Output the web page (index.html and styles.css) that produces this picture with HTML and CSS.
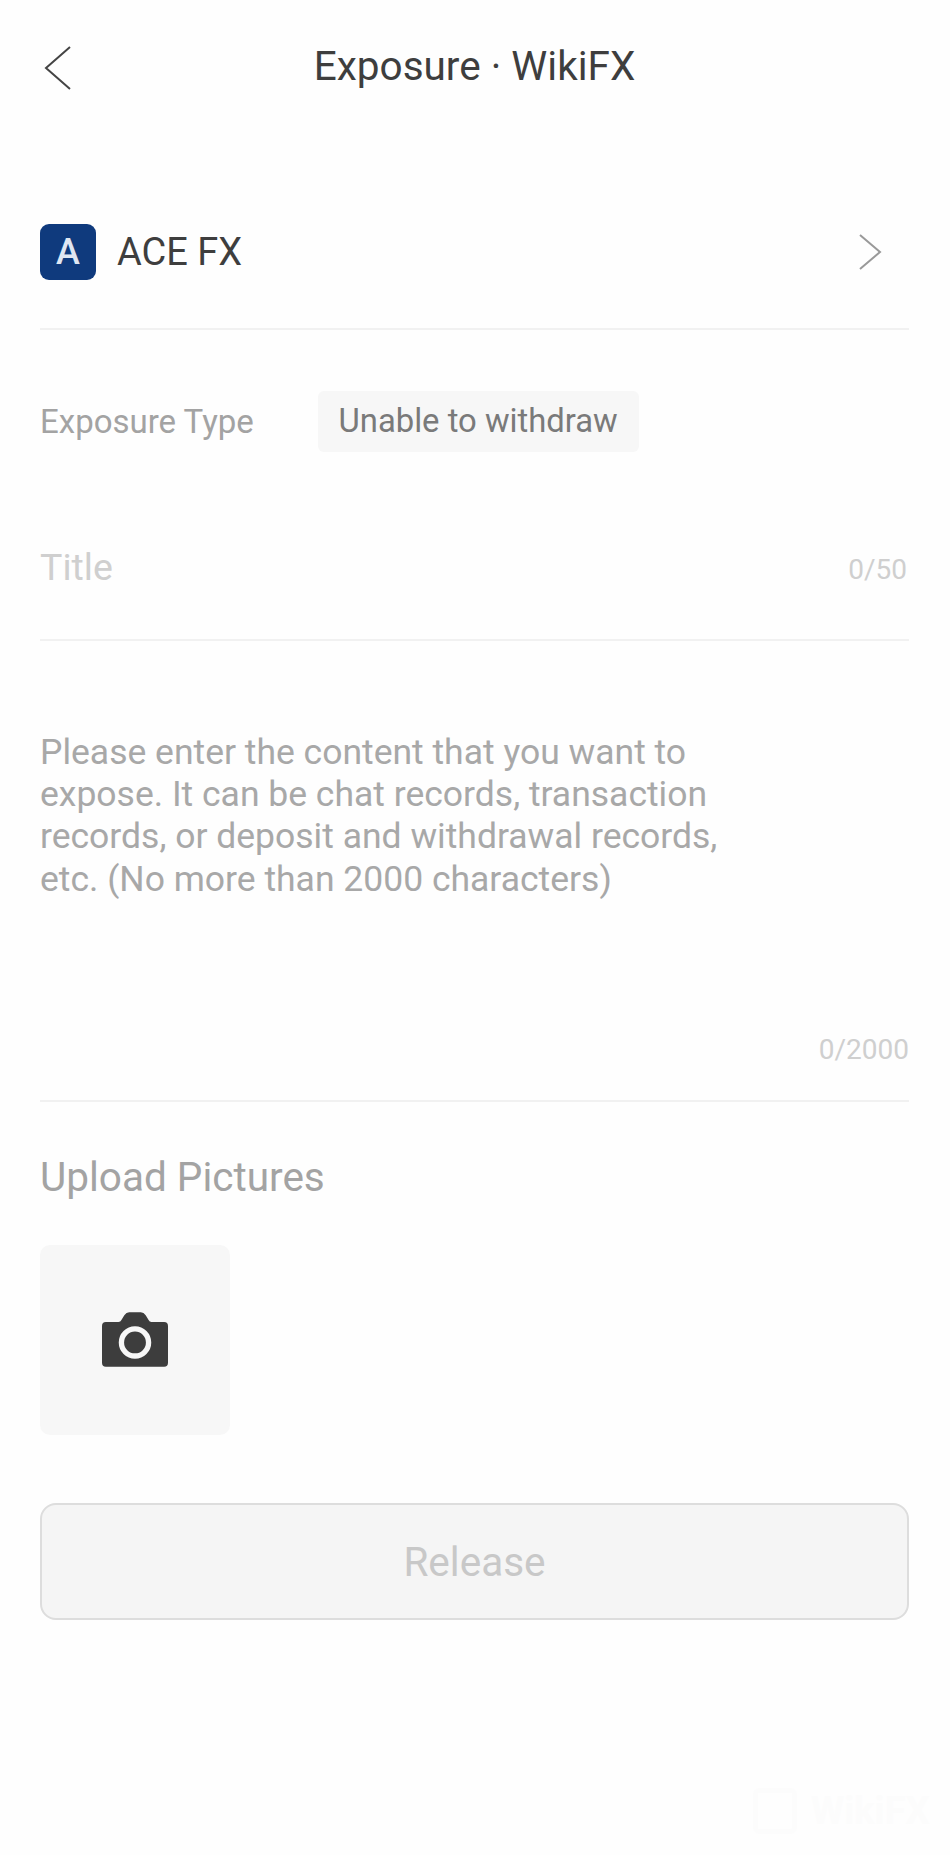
FILE: index.html
```html
<!DOCTYPE html>
<html lang="en">
<head>
  <meta charset="UTF-8" />
  <title>Exposure · WikiFX</title>
  <link rel="stylesheet" href="styles.css">
</head>
<body>

  <div class="page">
    <header class="topbar">
      <svg class="back" width="28" height="44" viewBox="0 0 28 44"><path d="M26 1 L2 22 L26 43" /></svg>
      <h1>Exposure · WikiFX</h1>
    </header>

    <div class="broker">
      <div class="logo">A</div>
      <span class="broker-name">ACE FX</span>
      <svg class="more" width="24" height="36" viewBox="0 0 24 36"><path d="M2 1 L22 18 L2 35" /></svg>
    </div>

    <div class="type-row">
      <span class="type-label">Exposure Type</span>
      <span class="tag">Unable to withdraw</span>
    </div>

    <div class="title-row">
      <span class="title-hint">Title</span>
      <span class="count">0/50</span>
    </div>

    <div class="content-box">
      <p class="content-hint">Please enter the content that you want to<br>expose. It can be chat records, transaction<br>records, or deposit and withdrawal records,<br>etc. (No more than 2000 characters)</p>
      <span class="count count-big">0/2000</span>
    </div>

    <div class="upload-label">Upload Pictures</div>
    <div class="upload-box">
      <svg width="66" height="55" viewBox="0 0 68 56">
        <path class="cam" d="M4 10 H17 Q19 10 20 8 L23 3 Q25 0 28 0 H40 Q43 0 45 3 L48 8 Q49 10 51 10 H64 Q68 10 68 14 V52 Q68 56 64 56 H4 Q0 56 0 52 V14 Q0 10 4 10 Z" />
        <circle class="cam-ring" cx="34" cy="31" r="14" />
      </svg>
    </div>

    <button class="release" type="button">Release</button>
  </div>

  <!-- watermark -->
  <div class="watermark">
    <span class="mark-box"></span>
    <span>WikiFX</span>
  </div>

</body>
</html>
```

FILE: styles.css
```css
* {
  box-sizing: border-box;
}

html, body {
  margin: 0;
  height: 1855px;
  overflow: hidden;
}

body {
  position: relative;
  background: #fefefe;
  font-family: Roboto, "Noto Sans", sans-serif;
  color: #333;
}

.page {
  padding: 0 41px 0 40px;
}

/* Thanh tieu de */
.topbar {
  height: 132px;
  display: flex;
  align-items: center;
  justify-content: center;
  position: relative;
}

.topbar h1 {
  margin: 0;
  font-size: 40.5px;
  font-weight: 400;
  color: #3e3e3e;
}

.back {
  position: absolute;
  left: 4px;
  top: 46px;
}

.back path, .more path {
  fill: none;
  stroke: #444;
  stroke-width: 2;
}

.more path {
  stroke: #999;
}

.broker {
  margin-top: 60px;
  height: 138px;
  display: flex;
  align-items: center;
  padding-bottom: 16px;
  border-bottom: 2px solid #f1f1f1;
}

.logo {
  width: 56px;
  height: 56px;
  border-radius: 9px;
  background: #0f3a7d;
  color: #dfe6f2;
  font-size: 36px;
  font-weight: 500;
  line-height: 56px;
  text-align: center;
}

.broker-name {
  margin-left: 21px;
  font-size: 38px;
  color: #3e3e3e;
}

.more {
  margin-left: auto;
  margin-right: 27px;
}

.type-row {
  margin-top: 61px;
  height: 61px;
  display: flex;
  align-items: center;
}

.type-label {
  width: 278px;
  font-size: 33px;
  color: #a3a3a3;
}

.tag {
  height: 61px;
  padding: 0 21px 2px 20.5px;
  display: flex;
  align-items: center;
  border-radius: 6px;
  background: #f7f7f7;
  font-size: 32.8px;
  color: #7a7a7a;
}

.title-row {
  margin-top: 62px;
  height: 127px;
  padding-top: 31px;
  display: flex;
  justify-content: space-between;
  align-items: flex-start;
  border-bottom: 2px solid #f1f1f1;
}

.title-hint {
  font-size: 37.5px;
  color: #cfcfcf;
}

.count {
  font-size: 28px;
  color: #cfcfcf;
}

.title-row .count {
  padding-top: 8px;
  padding-right: 2px;
}

.content-box {
  height: 461px;
  padding-top: 90px;
  border-bottom: 2px solid #f1f1f1;
  position: relative;
}

.content-hint {
  margin: 0;
  font-size: 35.5px;
  line-height: 42.2px;
  color: #a8a8a8;
}

.count-big {
  position: absolute;
  right: 0;
  bottom: 34px;
}

.upload-label {
  margin-top: 51px;
  font-size: 40.5px;
  color: #a3a3a3;
}

.upload-box {
  margin-top: 44px;
  width: 190px;
  height: 190px;
  padding-bottom: 2px;
  border-radius: 10px;
  background: #f7f7f7;
  display: flex;
  align-items: center;
  justify-content: center;
}

.cam {
  fill: #3d3d3d;
}

.cam-ring {
  fill: none;
  stroke: #f7f7f7;
  stroke-width: 5.5;
}

.release {
  display: block;
  margin-top: 68px;
  width: 100%;
  height: 117px;
  border: 2px solid #ddd;
  border-radius: 16px;
  background: #f5f5f5;
  font-family: inherit;
  font-size: 40.5px;
  color: #c8c8c8;
}

.watermark {
  position: absolute;
  left: 753px;
  top: 1788px;
  display: flex;
  align-items: center;
  gap: 14px;
  font-size: 38px;
  font-weight: 700;
  color: #fcfcfc;
}

.mark-box {
  width: 44px;
  height: 46px;
  border: 5px solid #fcfcfc;
  border-radius: 6px;
}
```
